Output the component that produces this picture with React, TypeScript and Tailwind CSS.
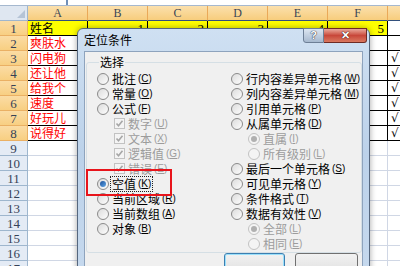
import React from 'react';

interface Option {
  label: string;
  hotkey: string;
  kind: 'radio' | 'check';
  indent?: boolean;
  disabled?: boolean;
  checked?: boolean;
  focus?: boolean;
}

const columns = ['A', 'B', 'C', 'D', 'E', 'F', 'G'];
const names = ['姓名', '爽肤水', '闪电狗', '还让他', '给我个', '速度', '好玩儿', '说得好'];

const leftOptions: Option[] = [
  { label: '批注', hotkey: 'C', kind: 'radio' },
  { label: '常量', hotkey: 'O', kind: 'radio' },
  { label: '公式', hotkey: 'F', kind: 'radio' },
  { label: '数字', hotkey: 'U', kind: 'check', indent: true, disabled: true, checked: true },
  { label: '文本', hotkey: 'X', kind: 'check', indent: true, disabled: true, checked: true },
  { label: '逻辑值', hotkey: 'G', kind: 'check', indent: true, disabled: true, checked: true },
  { label: '错误', hotkey: 'E', kind: 'check', indent: true, disabled: true, checked: true },
  { label: '空值', hotkey: 'K', kind: 'radio', checked: true, focus: true },
  { label: '当前区域', hotkey: 'R', kind: 'radio' },
  { label: '当前数组', hotkey: 'A', kind: 'radio' },
  { label: '对象', hotkey: 'B', kind: 'radio' },
];

const rightOptions: Option[] = [
  { label: '行内容差异单元格', hotkey: 'W', kind: 'radio' },
  { label: '列内容差异单元格', hotkey: 'M', kind: 'radio' },
  { label: '引用单元格', hotkey: 'P', kind: 'radio' },
  { label: '从属单元格', hotkey: 'D', kind: 'radio' },
  { label: '直属', hotkey: 'I', kind: 'radio', indent: true, disabled: true, checked: true },
  { label: '所有级别', hotkey: 'L', kind: 'radio', indent: true, disabled: true },
  { label: '最后一个单元格', hotkey: 'S', kind: 'radio' },
  { label: '可见单元格', hotkey: 'Y', kind: 'radio' },
  { label: '条件格式', hotkey: 'T', kind: 'radio' },
  { label: '数据有效性', hotkey: 'V', kind: 'radio' },
  { label: '全部', hotkey: 'L', kind: 'radio', indent: true, disabled: true, checked: true },
  { label: '相同', hotkey: 'E', kind: 'radio', indent: true, disabled: true },
];

const Radio: React.FC<{ checked?: boolean; disabled?: boolean }> = ({ checked, disabled }) => (
  <span
    className={`w-[12px] h-[12px] shrink-0 rounded-full border flex items-center justify-center ${
      disabled ? 'border-[#c2c2c2] bg-[#f4f4f4]' : 'border-[#8a8a8a] bg-gradient-to-br from-[#dcdcdc] to-[#fdfdfd]'
    }`}
  >
    {checked && (
      <span
        className={`w-[6px] h-[6px] rounded-full ${
          disabled ? 'bg-[#b0b0b0]' : 'bg-gradient-to-br from-[#1b4f9a] to-[#62a8e8]'
        }`}
      />
    )}
  </span>
);

const Check: React.FC = () => (
  <span className="w-[11px] h-[11px] shrink-0 border border-[#c2c2c2] bg-[#f4f4f4] flex items-center justify-center">
    <svg width="9" height="9" viewBox="0 0 9 9">
      <path d="M1.5 4.5 L3.5 6.8 L7.5 1.8" stroke="#a6a6a6" strokeWidth="1.6" fill="none" />
    </svg>
  </span>
);

const OptionRow: React.FC<{ opt: Option }> = ({ opt }) => (
  <div className={`h-[15px] flex items-center whitespace-nowrap ${opt.indent ? 'pl-[17px]' : ''}`}>
    {opt.kind === 'radio' ? <Radio checked={opt.checked} disabled={opt.disabled} /> : <Check />}
    <span
      className={`ml-[2px] px-[1px] flex items-center h-[14px] ${opt.disabled ? 'text-[#9c9c9c]' : 'text-black'} ${
        opt.focus ? 'outline outline-1 outline-dotted outline-[#222]' : ''
      }`}
    >
      <span className="text-[12px] leading-none">{opt.label}</span>
      <span className="text-[10px] leading-none ml-[2px] font-['Liberation_Sans',sans-serif]">
        (<span className="underline">{opt.hotkey}</span>)
      </span>
    </span>
  </div>
);

const App: React.FC = () => {
  const rows = Array.from({ length: 17 }, (_, i) => i + 1);

  return (
    <div className="relative w-[400px] h-[266px] overflow-hidden bg-white font-['Noto_Sans_CJK_SC',sans-serif]">
      {/* formula bar edge */}
      <div className="h-[6px] flex border-b border-[#a5b8cf] bg-white">
        <div className="w-[68px] border-r-2 border-[#6f8fb8]" />
      </div>

      {/* column headers */}
      <div className="flex h-[15px]">
        <div className="relative w-[28px] shrink-0 bg-[#dfe7f1] border-r border-b border-[#9eb6ce]">
          <div className="absolute right-[2px] bottom-[2px] w-0 h-0 border-l-[8px] border-l-transparent border-b-[8px] border-b-[#b5c4d6]" />
        </div>
        {columns.map((c) => (
          <div
            key={c}
            className="w-[60px] shrink-0 flex items-center justify-center bg-gradient-to-b from-[#fbe0ad] to-[#f7cd7c] border-r border-b border-r-[#eaa958] border-b-[#33507c] text-[12px] leading-none text-[#3b4656] font-['Liberation_Serif',serif]"
          >
            {c}
          </div>
        ))}
      </div>

      {/* rows */}
      {rows.map((r) => {
        const inTable = r <= 8;
        return (
          <div key={r} className="flex h-[15px]">
            <div
              className={`w-[28px] shrink-0 flex items-center justify-center border-r border-b text-[13px] leading-none text-[#354257] font-['Liberation_Serif',serif] ${
                inTable
                  ? 'bg-gradient-to-b from-[#fbdca4] to-[#f8cf82] border-[#eab064]'
                  : 'bg-[#e4ebf5] border-[#9eb6ce]'
              }`}
            >
              {r}
            </div>
            {columns.map((c, ci) => {
              const yellow = r === 1 && ci < 6;
              let content: React.ReactNode = null;
              if (inTable && ci === 0) {
                content = (
                  <span className={`text-[12px] leading-none pl-[2px] ${r === 1 ? 'text-black' : 'text-[#ff0000]'}`}>
                    {names[r - 1]}
                  </span>
                );
              } else if (r === 1 && ci > 0 && ci < 6) {
                content = (
                  <span className="ml-auto pr-[3px] text-[13px] leading-none font-['Liberation_Serif',serif]">{ci}</span>
                );
              } else if (r >= 3 && inTable && ci === 6) {
                content = (
                  <span className="pl-[3px] text-[12px] leading-none italic font-['DejaVu_Serif',serif]">√</span>
                );
              }
              return (
                <div
                  key={c}
                  className={`w-[60px] shrink-0 flex items-center border-r border-b ${
                    inTable ? 'border-black' : 'border-[#d0d7e5]'
                  } ${yellow ? 'bg-[#ffff00]' : 'bg-white'}`}
                >
                  {content}
                </div>
              );
            })}
          </div>
        );
      })}

      {/* dialog */}
      <div className="absolute left-[77px] top-[28px] w-[293px] h-[250px] flex flex-col rounded-t-[6px] border border-[#55677f] bg-gradient-to-b from-[#cfe0f2] via-[#bcd2ea] to-[#c6d9ee] shadow-[0_0_6px_rgba(0,0,0,0.35)]">
        <div className="h-[22px] shrink-0 flex items-start justify-between pl-[6px] pr-[2px]">
          <span className="mt-[5px] text-[12px] leading-none text-black">定位条件</span>
          <div className="flex -mt-px">
            <div className="w-[21px] h-[15px] flex items-center justify-center rounded-bl-[3px] border border-[#6d7f96] bg-gradient-to-b from-[#dce6f1] to-[#a7b9cf] text-[11px] font-bold leading-none text-white [text-shadow:0_0_1px_#223,0_0_1px_#223] font-['Liberation_Sans',sans-serif]">
              ?
            </div>
            <div className="w-[43px] h-[15px] flex items-center justify-center rounded-br-[3px] border border-l-0 border-[#6e2b24] bg-gradient-to-b from-[#e8a89c] via-[#c8473a] to-[#d9775f] text-[11px] font-bold leading-none text-white [text-shadow:0_0_1px_#300,0_0_1px_#300] font-['Liberation_Sans',sans-serif]">
              ✕
            </div>
          </div>
        </div>
        <div className="flex-1 mx-[6px] border border-[#8ea3bd] bg-[#f0f0f0] pt-[2px]">
          <fieldset className="mx-px border border-[#d5dfe5] rounded-[3px] pl-[10px]">
            <legend className="ml-[2px] px-[1px] text-[12px] leading-[16px] text-black">选择</legend>
            <div className="flex pt-px pb-[1px]">
              <div className="w-[134px] shrink-0 flex flex-col">
                {leftOptions.map((o) => (
                  <OptionRow key={o.label} opt={o} />
                ))}
              </div>
              <div className="flex-1 min-w-0 flex flex-col">
                {rightOptions.map((o) => (
                  <OptionRow key={o.label} opt={o} />
                ))}
              </div>
            </div>
          </fieldset>
          <div className="flex justify-end gap-[10px] pr-[4px] mt-0">
            <div className="w-[61px] h-[25px] rounded-[3px] border border-[#3c7fb1] bg-gradient-to-b from-[#f2f2f2] to-[#dcdcdc] shadow-[inset_0_0_0_1px_#9be0fb] flex justify-center pt-[13px] text-[12px] leading-none">
              确定
            </div>
            <div className="w-[63px] h-[25px] rounded-[3px] border border-[#707070] bg-gradient-to-b from-[#f2f2f2] to-[#dcdcdc] flex justify-center pt-[13px] text-[12px] leading-none">
              取消
            </div>
          </div>
        </div>
      </div>

      {/* highlight box */}
      <div className="absolute left-[86px] top-[169px] w-[86px] h-[27px] border-2 border-[#e8141b]" />
    </div>
  );
};

export default App;
